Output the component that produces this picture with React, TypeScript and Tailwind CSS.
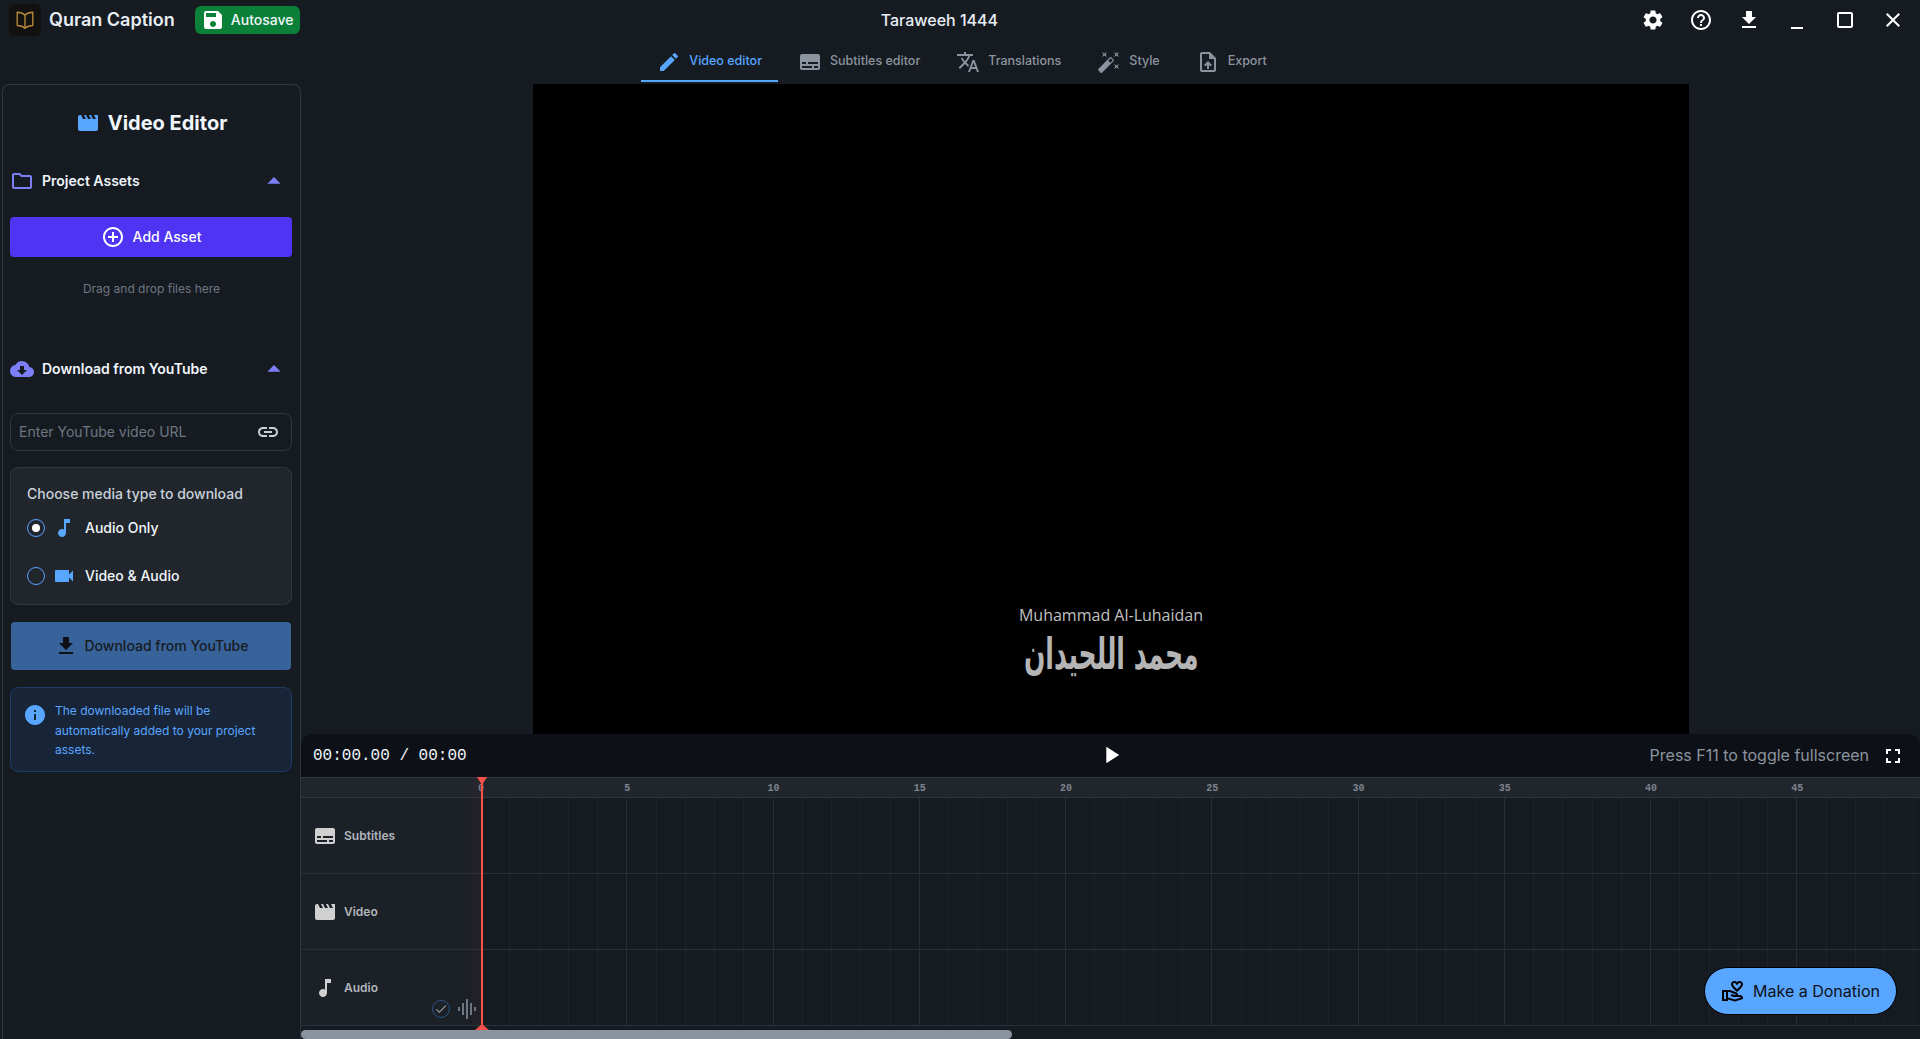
import type { ReactNode } from 'react';
import {
  MdAddCircleOutline,
  MdArrowDropUp,
  MdAutoFixHigh,
  MdCheck,
  MdClose,
  MdCloudDownload,
  MdCropSquare,
  MdEdit,
  MdFileDownload,
  MdFullscreen,
  MdGraphicEq,
  MdHelpOutline,
  MdInfo,
  MdLink,
  MdMinimize,
  MdMovie,
  MdMusicNote,
  MdOutlineFolder,
  MdOutlineUploadFile,
  MdOutlineVolunteerActivism,
  MdPlayArrow,
  MdSave,
  MdSettings,
  MdSubtitles,
  MdTranslate,
  MdVideocam,
} from 'react-icons/md';

const seconds = Array.from({ length: 50 }, (_, i) => i);

function BookLogo() {
  return (
    <svg viewBox="0 0 24 24" className="w-[22px] h-[22px]" fill="none" stroke="#b58a3c" strokeWidth="1.5" strokeLinejoin="round">
      <path d="M12 6.5C10 4.5 6.5 3.5 3.5 3.5V18c3 0 6.5 1 8.5 3 2-2 5.5-3 8.5-3V3.5c-3 0-6.5 1-8.5 3z" />
      <path d="M12 6.5V21" />
    </svg>
  );
}

function Tab({ icon, label, active }: { icon: ReactNode; label: string; active?: boolean }) {
  return (
    <div
      className={`h-[42px] flex items-center gap-2 px-4 pt-[3px] text-[12.5px] font-medium border-b-2 ${
        active ? 'text-[#58a6ff] border-[#58a6ff]' : 'text-[#8b949e] border-transparent'
      }`}
    >
      <span className="text-[24px]">{icon}</span>
      {label}
    </div>
  );
}

function SectionHeader({ icon, label }: { icon: ReactNode; label: string }) {
  return (
    <div className="flex items-center h-6 pl-[7px] pr-[10px]">
      <span className="w-6 text-[24px] text-[#7c7ff7] flex justify-center">{icon}</span>
      <span className="ml-2 flex-1 text-sm font-semibold text-[#f0f6fc]">{label}</span>
      <MdArrowDropUp className="text-[32px] text-[#7c7ff7]" />
    </div>
  );
}

function MediaOption({ icon, label, checked }: { icon: ReactNode; label: string; checked?: boolean }) {
  return (
    <div className="flex items-center h-5">
      <span className="w-[18px] h-[18px] rounded-full border border-[#58a6ff] flex items-center justify-center">
        {checked && <span className="w-2 h-2 rounded-full bg-white" />}
      </span>
      <span className="ml-[7px] w-6 text-[24px] text-[#58a6ff] flex justify-center">{icon}</span>
      <span className="ml-[9px] text-sm font-medium text-[#f0f6fc]">{label}</span>
    </div>
  );
}

function Sidebar() {
  return (
    <aside className="w-[299px] ml-[2px] shrink-0 rounded-t-lg border border-b-0 border-[#30363d] bg-[#161b22]">
      <div className="flex items-center justify-center gap-2 pt-1 h-[72px]">
        <MdMovie className="text-[24px] text-[#58a6ff]" />
        <h1 className="text-xl font-bold text-[#f0f6fc]">Video Editor</h1>
      </div>
      <div className="mt-[12px]">
        <SectionHeader icon={<MdOutlineFolder />} label="Project Assets" />
      </div>
      <div className="ml-[7px] mr-2 mt-[24px] h-10 rounded bg-[#4f35f3] flex items-center justify-center gap-2 text-sm font-medium text-white">
        <MdAddCircleOutline className="text-[24px]" />
        Add Asset
      </div>
      <p className="mt-[24px] text-center text-xs text-[#6e7681]">Drag and drop files here</p>
      <div className="mt-[60px]">
        <SectionHeader icon={<MdCloudDownload />} label="Download from YouTube" />
      </div>
      <div className="ml-[7px] mr-2 mt-[32px] h-[38px] rounded-lg border border-[#30363d] flex items-center justify-between pl-2 pr-[11px]">
        <span className="text-sm text-[#6e7681]">Enter YouTube video URL</span>
        <MdLink className="text-[24px] text-[#c9d1d9]" />
      </div>
      <div className="ml-[7px] mr-2 mt-4 h-[138px] rounded-lg border border-[#30363d] bg-[#21262d] px-4 pt-4">
        <p className="text-sm font-medium leading-5 text-[#c9d1d9]">Choose media type to download</p>
        <div className="mt-[14px] flex flex-col gap-[28px]">
          <MediaOption icon={<MdMusicNote />} label="Audio Only" checked />
          <MediaOption icon={<MdVideocam />} label="Video & Audio" />
        </div>
      </div>
      <div className="ml-2 mr-[9px] mt-[17px] h-12 rounded bg-[#38629a] flex items-center justify-center gap-[7px] text-sm font-medium text-[#161b22]">
        <MdFileDownload className="text-[24px] text-[#0d1117]" />
        Download from YouTube
      </div>
      <div className="ml-[7px] mr-2 mt-[17px] h-[85px] rounded-lg border border-[#1d3b63] bg-[#182539] flex pl-3 pr-4 pt-[15px]">
        <MdInfo className="text-[24px] shrink-0 text-[#58a6ff]" />
        <p className="ml-2 text-xs leading-[19.5px] text-[#58a6ff] -mt-[2px]">
          The downloaded file will be automatically added to your project assets.
        </p>
      </div>
    </aside>
  );
}

function TrackLabel({ icon, label, children }: { icon: ReactNode; label: string; children?: ReactNode }) {
  return (
    <div className="relative h-[76px] w-[180px] shrink-0 border-b border-[#2a313b] flex items-center pl-3 bg-[#1c2027]">
      <span className="w-6 text-[24px] text-[#d0d0d0] flex justify-center">{icon}</span>
      <span className="ml-[7px] text-xs font-semibold text-[#b1b6bd]">{label}</span>
      {children}
    </div>
  );
}

function TrackCells() {
  return (
    <div className="flex h-[76px] border-b border-[#2a313b]">
      {seconds.map((s) => (
        <div
          key={s}
          className={`w-[29.25px] h-full shrink-0 border-r ${s % 5 === 4 ? 'border-[#272d36]' : 'border-[#1e232b]'}`}
        />
      ))}
    </div>
  );
}

function Timeline() {
  return (
    <div className="relative flex-1 min-h-0 overflow-hidden">
      <div className="h-[21px] flex border-y border-[#30363d] bg-[#21262d] overflow-hidden">
        <div className="w-[180px] shrink-0" />
        {seconds.map((s) => (
          <div key={s} className="relative w-[29.25px] shrink-0">
            {s % 5 === 0 && (
              <span className="absolute -left-[10px] top-[3px] w-5 text-center font-['Liberation_Mono',monospace] text-[10px] font-bold text-[#7d848d]">
                {s}
              </span>
            )}
          </div>
        ))}
      </div>
      <div className="flex bg-[#161b22]">
        <div className="flex flex-col">
          <TrackLabel icon={<MdSubtitles />} label="Subtitles" />
          <TrackLabel icon={<MdMovie />} label="Video" />
          <TrackLabel icon={<MdMusicNote />} label="Audio">
            <span className="absolute left-[131px] top-[50px] w-[18px] h-[18px] rounded-full border border-[#2a5585] flex items-center justify-center">
              <MdCheck className="text-[14px] text-[#9aa0a6]" />
            </span>
            <MdGraphicEq className="absolute left-[154px] top-[47px] text-[24px] text-[#6e7681]" />
          </TrackLabel>
        </div>
        <div className="flex-1 min-w-0 overflow-hidden">
          <TrackCells />
          <TrackCells />
          <TrackCells />
        </div>
      </div>
      {/* playhead + scrollbar */}
      <div className="absolute left-[180px] top-0 bottom-[13px] w-[2px] bg-[#f85149] shadow-[-4px_0_8px_rgba(248,81,73,0.2)]" />
      <div className="absolute left-[176px] top-0 w-0 h-0 border-x-[5px] border-x-transparent border-t-[8px] border-t-[#f85149]" />
      <div className="absolute left-[174px] bottom-[9px] w-0 h-0 border-x-[7px] border-x-transparent border-b-[6px] border-b-[#f85149]" />
      <div className="absolute left-0 bottom-0 h-[9px] w-[711px] rounded-full bg-[#8b949e]" />
    </div>
  );
}

export default function App() {
  return (
    <div className="w-screen h-screen overflow-hidden flex flex-col bg-[#161b22] font-['Inter',sans-serif]">
      <header className="h-10 shrink-0 flex items-center">
        <div className="ml-[9px] w-8 h-8 rounded-md bg-[#12110f] flex items-center justify-center">
          <BookLogo />
        </div>
        <span className="ml-2 text-lg font-semibold text-[#e6edf3]">Quran Caption</span>
        <div className="ml-5 w-[105px] h-7 rounded-md bg-[#0a8038] flex items-center justify-center gap-[6px] text-sm font-medium text-[#f0f6fc]">
          <MdSave className="text-[24px] text-white" />
          Autosave
        </div>
        <span className="ml-[581px] text-base font-medium text-[#e6edf3]">Taraweeh 1444</span>
        <div className="ml-auto mr-[15px] flex items-center gap-6 text-[24px] text-white">
          <MdSettings />
          <MdHelpOutline />
          <MdFileDownload />
          <MdMinimize />
          <MdCropSquare />
          <MdClose />
        </div>
      </header>

      <nav className="h-11 shrink-0 flex justify-center gap-1 pl-1">
        <Tab icon={<MdEdit />} label="Video editor" active />
        <Tab icon={<MdSubtitles />} label="Subtitles editor" />
        <Tab icon={<MdTranslate />} label="Translations" />
        <Tab icon={<MdAutoFixHigh />} label="Style" />
        <Tab icon={<MdOutlineUploadFile />} label="Export" />
      </nav>

      <div className="flex-1 min-h-0 flex">
        <Sidebar />
        <main className="flex-1 min-w-0 flex flex-col">
          <div className="h-[650px] shrink-0 flex justify-center">
            <div className="w-[1156px] h-full bg-black flex flex-col items-center justify-end pb-[55px] ml-px">
              <p className="font-['Open_Sans',sans-serif] text-base text-[#c0c0c0]">Muhammad Al-Luhaidan</p>
              <p dir="rtl" className="font-['DejaVu_Sans',sans-serif] text-[44px] leading-[50px] font-bold text-[#b5b5b5] mt-[2px] scale-x-[0.57]">
                محمد اللحيدان
              </p>
            </div>
          </div>
          <div className="h-[43px] shrink-0 rounded-t-xl bg-[#0d1117] flex items-center pl-3 pr-[15px]">
            <span className="flex-1 font-['Liberation_Mono',monospace] text-base text-[#f0f6fc]">00:00.00 / 00:00</span>
            <MdPlayArrow className="ml-1 -mt-[2px] text-[28px] text-white" />
            <div className="flex-1 flex items-center justify-end">
              <span className="text-base text-[#8b949e] -mt-px">Press F11 to toggle fullscreen</span>
              <MdFullscreen className="ml-3 text-[24px] text-white" />
            </div>
          </div>
          <Timeline />
        </main>
      </div>

      <div className="fixed left-[1704px] top-[967px] w-[193px] h-[48px] rounded-full border border-black bg-[#58a6ff] flex items-center justify-center gap-2 text-base text-[#0d1117]">
        <MdOutlineVolunteerActivism className="text-[24px] text-black" />
        Make a Donation
      </div>
    </div>
  );
}
